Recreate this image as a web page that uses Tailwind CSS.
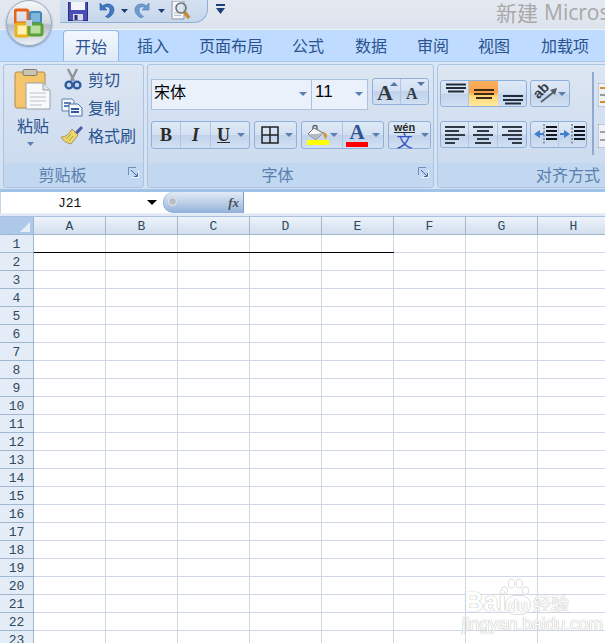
<!DOCTYPE html>
<html lang="zh">
<head>
<meta charset="utf-8">
<script src="https://cdn.jsdelivr.net/npm/@tailwindcss/browser@4"></script>
<title>Excel</title>
</head>
<body class="w-[605px] h-[643px] overflow-hidden relative bg-white font-['Noto_Sans_CJK_SC','Liberation_Sans',sans-serif]">

<!-- Office button -->
<div class="absolute left-[6px] top-0 w-[46px] h-[46px] rounded-full border border-[#9aa9bd] bg-[linear-gradient(#f7f8fa,#d3d9e2_50%,#b4bdc9_55%,#eef1f5)] shadow-[0_1px_2px_#7f93ad] flex items-center justify-center">
  <svg width="30" height="30" viewBox="0 0 30 30">
    <rect x="1" y="2" width="13" height="13" rx="2" fill="none" stroke="#e8641c" stroke-width="3"/>
    <rect x="16" y="4" width="11" height="11" rx="2" fill="#7fb6dc" stroke="#3f86bd" stroke-width="2"/>
    <rect x="2" y="16" width="12" height="12" rx="1" fill="#fff2b0" stroke="#e9b41c" stroke-width="3"/>
    <rect x="15" y="16" width="13" height="11" rx="2" fill="#b9dca0" stroke="#5da035" stroke-width="3"/>
    <rect x="12" y="12" width="6" height="6" fill="#c9d2db"/>
  </svg>
</div>

<!-- Title bar -->
<div class="h-[30px] flex items-start bg-[linear-gradient(#e4e9f1,#dde3ec)] border-b border-[#eef3fa]">
  <div class="ml-[60px] w-[148px] h-[23px] shrink-0 flex items-center rounded-br-[14px] border-r border-b border-[#8eaed8] bg-[linear-gradient(#d5e1f0,#c6d7ec)]">
    <!-- save -->
    <svg class="ml-[8px] shrink-0" width="20" height="19" viewBox="0 0 20 19">
      <rect x="0.5" y="-2" width="19" height="20.5" fill="#4b4eb4" stroke="#2b2e80"/>
      <rect x="3" y="-1" width="14" height="9" fill="#f2f4fa"/>
      <rect x="5" y="12" width="10" height="6.5" fill="#d7dbe8"/>
      <rect x="6.5" y="13" width="3" height="5" fill="#2b2e80"/>
    </svg>
    <!-- undo -->
    <svg class="ml-[9px] shrink-0" width="18" height="18" viewBox="0 0 18 18">
      <path d="M3 1 L3 8 L10 8 L7.4 5.6 C10 3.8 13 5 13 8 C13 11 11 13 8.5 14.5 L11 16 C15 14 17 11 17 7.5 C17 2.5 10.5 0 5.6 3.8 Z" fill="#3f78c0" stroke="#2a5b9e" stroke-width="0.6"/>
    </svg>
    <svg class="ml-[6px] shrink-0" width="7" height="4" viewBox="0 0 7 4"><path d="M0 0H7L3.5 4Z" fill="#1f3f78"/></svg>
    <!-- redo -->
    <svg class="ml-[6px] shrink-0" width="18" height="18" viewBox="0 0 18 18">
      <path d="M15 1 L15 8 L8 8 L10.6 5.6 C8 3.8 5 5 5 8 C5 11 7 13 9.5 14.5 L7 16 C3 14 1 11 1 7.5 C1 2.5 7.5 0 12.4 3.8 Z" fill="#6f9bd0" stroke="#4a78b0" stroke-width="0.6"/>
    </svg>
    <svg class="ml-[6px] shrink-0" width="7" height="4" viewBox="0 0 7 4"><path d="M0 0H7L3.5 4Z" fill="#1f3f78"/></svg>
    <!-- print preview -->
    <svg class="ml-[6px] shrink-0" width="21" height="20" viewBox="0 0 21 20">
      <path d="M1 0H13V18H1Z" fill="#f4f5f7" stroke="#8d96a3"/>
      <path d="M3 12H10M3 14.500H10" stroke="#b9bfc8"/>
      <circle cx="10" cy="7" r="5" fill="#cfe0ee" fill-opacity="0.7" stroke="#6d7076" stroke-width="1.6"/>
      <path d="M13.500 11L18 17" stroke="#c98a2a" stroke-width="3.400"/>
    </svg>
  </div>
  <svg class="ml-[8px] mt-[4px] shrink-0" width="9" height="11" viewBox="0 0 9 11"><rect x="0" y="0" width="9" height="2" fill="#1f3f78"/><path d="M0 4H9L4.5 10Z" fill="#1f3f78"/></svg>
  <div class="ml-[271px] shrink-0 flex gap-[6px] whitespace-nowrap text-[21px] leading-[24px] text-[#a8a8a8]"><span>新建</span><span class="font-['Open_Sans',sans-serif]">Micros</span></div>
</div>

<!-- Tabs -->
<div class="h-[31px] flex pl-[63px] bg-[#bfdbff] text-[16px] leading-[30px] text-[#2a5390] whitespace-nowrap">
  <div class="w-[56px] h-[31px] text-center rounded-t-[4px] border border-b-0 border-[#8fb6e4] bg-[linear-gradient(#f3f8fd,#dde9f7)] shrink-0">开始</div>
  <div class="w-[68px] text-center shrink-0">插入</div>
  <div class="w-[88px] text-center shrink-0">页面布局</div>
  <div class="w-[66px] text-center shrink-0">公式</div>
  <div class="w-[60px] text-center shrink-0">数据</div>
  <div class="w-[64px] text-center shrink-0">审阅</div>
  <div class="w-[58px] text-center shrink-0">视图</div>
  <div class="w-[84px] text-center shrink-0">加载项</div>
</div>

<!-- Ribbon -->
<div class="h-[131px] flex gap-[3px] pl-[3px] pt-[2px] bg-[linear-gradient(#dce7f5,#d3e1f2)] border-t border-[#a9c8ea] border-b-[3px] border-b-[#9fc4e8] overflow-hidden">

  <!-- Clipboard -->
  <div class="w-[141px] h-[124px] shrink-0 flex flex-col rounded-[3px] border border-[#aac5e4] bg-[linear-gradient(#dde6f2,#c9d9ee)]">
    <div class="h-[98px] flex text-[16px] text-[#2a5390] leading-[28px]">
      <div class="w-[60px] pl-[10px] flex flex-col items-start shrink-0">
        <svg class="mt-[4px]" width="38" height="42" viewBox="0 0 38 42">
          <rect x="1" y="3" width="30" height="36" rx="2" fill="#f5c56c" stroke="#b28a4e"/>
          <rect x="9" y="0.5" width="14" height="6" rx="1.5" fill="#c9c4b4" stroke="#857c68"/>
          <path d="M12 14H29L36 21V40H12Z" fill="#f8f9fb" stroke="#9aa3ad"/>
          <path d="M29 14V21H36" fill="#dfe4ea" stroke="#9aa3ad"/>
          <path d="M16 24H32M16 28H32M16 32H32M16 36H28" stroke="#bcc3cc"/>
        </svg>
        <div class="mt-[0px] ml-[3px]">粘贴</div>
        <svg class="ml-[13px] mt-[3px]" width="7" height="4" viewBox="0 0 7 4"><path d="M0 0H7L3.5 4Z" fill="#5b7fb0"/></svg>
      </div>
      <div class="flex flex-col -ml-[3px]">
        <div class="flex items-center h-[28px]">
          <svg class="w-[22px] ml-[1px]" width="20" height="22" viewBox="0 0 22 22">
            <path d="M6 1L12 13M15 1L9 13" stroke="#8f949b" stroke-width="2.4"/>
            <circle cx="7" cy="17" r="3.4" fill="#c8d6ea" stroke="#2f5aa0" stroke-width="2.4"/>
            <circle cx="15" cy="17" r="3.4" fill="#c8d6ea" stroke="#2f5aa0" stroke-width="2.4"/>
          </svg>
          <span class="ml-[4px]">剪切</span>
        </div>
        <div class="flex items-center h-[28px]">
          <svg class="w-[22px]" width="22" height="20" viewBox="0 0 22 20">
            <path d="M1 2H11L13 4V14H1Z" fill="#f4f7fb" stroke="#5f7fae"/>
            <path d="M3 6H10M3 9H10" stroke="#2f5aa0" stroke-width="1.400"/>
            <path d="M8 7H17L21 11V19H8Z" fill="#f4f7fb" stroke="#4f70a5"/>
            <path d="M10 12H18M10 15H18" stroke="#2f5aa0" stroke-width="1.800"/>
          </svg>
          <span class="ml-[5px]">复制</span>
        </div>
        <div class="flex items-center h-[28px]">
          <svg class="w-[22px]" width="22" height="20" viewBox="0 0 22 20">
            <path d="M13 8L20 1L22 3L15 11Z" fill="#4a5fa8"/>
            <path d="M11 4L17 10L10 19C6 18 2 16 0 12C5 12 8 9 11 4Z" fill="#ecd76e" stroke="#8e7a3a" stroke-width="0.7"/>
            <path d="M5 14L10 9M8 16L12 11" stroke="#a58d3f" stroke-width="0.8"/>
          </svg>
          <span class="ml-[5px]">格式刷</span>
        </div>
      </div>
    </div>
    <div class="flex-1 relative flex items-center justify-center pr-[22px] pb-[2px] bg-[#c1d8f0] text-[16px] text-[#5a7fae] rounded-b-[3px] leading-none">
      剪贴板
      <svg class="absolute right-[4px] top-[4px]" width="11" height="11" viewBox="0 0 11 11"><path d="M0.5 8V0.5H8" fill="none" stroke="#6f8fb8"/><path d="M3 3L9 9M6 9.5H9.5V6" fill="none" stroke="#3f6aa5"/><path d="M10.5 3V10.5H3" fill="none" stroke="#f3f7fc"/></svg>
    </div>
  </div>

  <!-- Font -->
  <div class="w-[287px] h-[124px] shrink-0 flex flex-col rounded-[3px] border border-[#aac5e4] bg-[linear-gradient(#dde6f2,#c9d9ee)]">
    <div class="h-[98px] pl-[3px] pt-[14px]">
      <div class="flex items-start">
        <div class="w-[161px] h-[31px] flex items-center justify-between pl-[2px] pr-[4px] border border-[#a9c2e0] bg-[#eaf1fb] text-[16px] text-black leading-none">
          <span class="mb-[8px]">宋体</span>
          <svg class="-mt-[2px]" width="8" height="4" viewBox="0 0 8 4"><path d="M0 0H8L4 4Z" fill="#5b7fb0"/></svg>
        </div>
        <div class="w-[57px] h-[31px] -ml-px flex items-center justify-between pl-[3px] pr-[4px] border border-[#a9c2e0] bg-[#eaf1fb] text-[17px] text-black leading-none font-['Liberation_Sans',sans-serif]">
          <span class="mb-[6px]">11</span>
          <svg class="-mt-[2px]" width="8" height="4" viewBox="0 0 8 4"><path d="M0 0H8L4 4Z" fill="#5b7fb0"/></svg>
        </div>
        <div class="ml-[4px] -mt-px w-[57px] h-[27px] flex rounded-[3px] border border-[#8fb0da] bg-[linear-gradient(#dfe9f6,#d3e0f1_50%,#c0d2ea_50%,#d2e0f2)] font-['Liberation_Serif',serif] font-bold text-[#333a44]">
          <div class="w-[28px] relative border-r border-[#aec6e4] text-[22px] leading-[27px] pl-[4px]">A<svg class="absolute right-[2px] top-[3px]" width="8" height="4" viewBox="0 0 8 4"><path d="M0 4H8L4 0Z" fill="#4f76ad"/></svg></div>
          <div class="flex-1 relative text-[16px] leading-[30px] pl-[5px]">A<svg class="absolute right-[3px] top-[3px]" width="8" height="4" viewBox="0 0 8 4"><path d="M0 0H8L4 4Z" fill="#4f76ad"/></svg></div>
        </div>
      </div>
      <div class="flex gap-[4px] mt-[11px] h-[28px]">
        <div class="w-[99px] flex rounded-[3px] border border-[#8fb0da] bg-[linear-gradient(#dfe9f6,#d3e0f1_50%,#c0d2ea_50%,#d2e0f2)] font-['Liberation_Serif',serif] font-bold text-[18px] leading-[26px] text-[#2a2a2a]">
          <div class="w-[29px] text-center border-r border-[#aec6e4]">B</div>
          <div class="w-[30px] text-center border-r border-[#aec6e4] italic">I</div>
          <div class="flex-1 flex items-center pl-[6px] gap-[7px]"><span class="underline">U</span><svg width="8" height="4" viewBox="0 0 8 4"><path d="M0 0H8L4 4Z" fill="#5b7fb0"/></svg></div>
        </div>
        <div class="w-[43px] flex items-center pl-[6px] gap-[6px] rounded-[3px] border border-[#8fb0da] bg-[linear-gradient(#dfe9f6,#d3e0f1_50%,#c0d2ea_50%,#d2e0f2)]">
          <svg width="18" height="18" viewBox="0 0 18 18"><path d="M1 1H17V17H1ZM9 1V17M1 9H17" fill="none" stroke="#222" stroke-width="1.5"/></svg>
          <svg width="8" height="4" viewBox="0 0 8 4"><path d="M0 0H8L4 4Z" fill="#5b7fb0"/></svg>
        </div>
        <div class="w-[83px] flex rounded-[3px] border border-[#8fb0da] bg-[linear-gradient(#dfe9f6,#d3e0f1_50%,#c0d2ea_50%,#d2e0f2)]">
          <div class="w-[41px] flex flex-col items-center relative border-r border-[#aec6e4] pr-[10px]">
            <svg class="mt-[2px]" width="22" height="17" viewBox="0 0 22 17">
              <path d="M7 6V3C7 1 11 1 11 3V6" fill="none" stroke="#5d6168" stroke-width="1.400"/>
              <path d="M8 4L17 9L10 16L2 10Z" fill="#f6f7f8" stroke="#6d7076"/>
              <path d="M2 10L10 16L17 9L10 10Z" fill="#b4bbc5"/>
              <path d="M17 8C21 9 22 12 20 15C18 13 17 11 17 8Z" fill="#d39a2a"/>
            </svg>
            <div class="w-[22px] h-[5px] bg-[#ffff00] -mt-[1px] ml-[1px]"></div>
            <svg class="absolute right-[4px] top-[11px]" width="8" height="4" viewBox="0 0 8 4"><path d="M0 0H8L4 4Z" fill="#5b7fb0"/></svg>
          </div>
          <div class="flex-1 flex flex-col items-center relative pr-[11px] ml-[-1px]">
            <span class="font-['Liberation_Serif',serif] font-bold text-[21px] leading-[20px] text-[#2f5293]">A</span>
            <div class="w-[22px] h-[5px] bg-[#ff0000]"></div>
            <svg class="absolute right-[3px] top-[11px]" width="8" height="4" viewBox="0 0 8 4"><path d="M0 0H8L4 4Z" fill="#5b7fb0"/></svg>
          </div>
        </div>
        <div class="w-[43px] flex items-center rounded-[3px] border border-[#8fb0da] bg-[linear-gradient(#dfe9f6,#d3e0f1_50%,#c0d2ea_50%,#d2e0f2)]">
          <div class="w-[27px] ml-[2px] flex flex-col items-center">
            <span class="font-['Liberation_Sans',sans-serif] font-bold text-[11px] leading-[10px] text-[#2a2a2a] border-b border-[#2a2a2a]">wén</span>
            <span class="text-[16px] leading-[15px] text-[#3350c0]">文</span>
          </div>
          <svg class="ml-[3px]" width="8" height="4" viewBox="0 0 8 4"><path d="M0 0H8L4 4Z" fill="#5b7fb0"/></svg>
        </div>
      </div>
    </div>
    <div class="flex-1 relative flex items-center justify-center pr-[26px] pb-[2px] bg-[#c1d8f0] text-[16px] text-[#5a7fae] rounded-b-[3px] leading-none">
      字体
      <svg class="absolute right-[4px] top-[4px]" width="11" height="11" viewBox="0 0 11 11"><path d="M0.5 8V0.5H8" fill="none" stroke="#6f8fb8"/><path d="M3 3L9 9M6 9.5H9.5V6" fill="none" stroke="#3f6aa5"/><path d="M10.5 3V10.5H3" fill="none" stroke="#f3f7fc"/></svg>
    </div>
  </div>

  <!-- Alignment -->
  <div class="w-[190px] h-[124px] shrink-0 flex flex-col rounded-l-[3px] border border-[#aac5e4] bg-[linear-gradient(#dde6f2,#c9d9ee)]">
    <div class="h-[98px] flex">
      <div class="w-[150px] pl-[2px] pt-[15px] shrink-0">
        <div class="flex gap-[3px]">
          <div class="w-[87px] h-[27px] flex rounded-[3px] border border-[#8fb0da] overflow-hidden bg-[linear-gradient(#dfe9f6,#d3e0f1_50%,#c0d2ea_50%,#d2e0f2)]">
            <div class="w-[28px] border-r border-[#aec6e4]">
              <svg width="28" height="25" viewBox="0 0 28 25"><path d="M5 3.5H25M5 7H25M7 10.5H23" stroke="#222c3a" stroke-width="1.800"/></svg>
            </div>
            <div class="w-[29px] bg-[linear-gradient(#fbb05f,#f9a046_45%,#ffd877_60%,#ffe99c)]">
              <svg width="29" height="25" viewBox="0 0 29 25"><path d="M5 9H25M5 13H25M7 17H23" stroke="#3a2c18" stroke-width="1.800"/></svg>
            </div>
            <div class="flex-1">
              <svg width="28" height="25" viewBox="0 0 28 25"><path d="M5 15H25M5 19H25M7 22.5H23" stroke="#222c3a" stroke-width="1.800"/></svg>
            </div>
          </div>
          <div class="w-[40px] h-[27px] flex items-center relative rounded-[3px] border border-[#8fb0da] bg-[linear-gradient(#dfe9f6,#d3e0f1_50%,#c0d2ea_50%,#d2e0f2)]">
            <svg class="absolute left-[4px] top-[3px]" width="24" height="20" viewBox="0 0 24 20"><path d="M6 18L20 7" stroke="#555c66" stroke-width="1.600"/><path d="M22 4L20 11L15 6Z" fill="#555c66"/></svg>
            <span class="absolute left-[2px] top-[2px] text-[14px] leading-[15px] font-bold text-[#333a44] rotate-[-45deg] font-['Liberation_Sans',sans-serif]">ab</span>
            <svg class="ml-[27px]" width="8" height="4" viewBox="0 0 8 4"><path d="M0 0H8L4 4Z" fill="#5b7fb0"/></svg>
          </div>
        </div>
        <div class="flex gap-[3px] mt-[14px]">
          <div class="w-[87px] h-[27px] flex rounded-[3px] border border-[#8fb0da] bg-[linear-gradient(#dfe9f6,#d3e0f1_50%,#c0d2ea_50%,#d2e0f2)]">
            <div class="w-[28px] border-r border-[#aec6e4]"><svg width="28" height="25" viewBox="0 0 28 25"><path d="M4 5H24M4 9H18M4 13H24M4 17H18M4 21H14" stroke="#2f3947" stroke-width="1.800"/></svg></div>
            <div class="w-[29px] border-r border-[#aec6e4]"><svg width="28" height="25" viewBox="0 0 28 25"><path d="M4 5H24M8 9H20M4 13H24M8 17H20M6 21H22" stroke="#2f3947" stroke-width="1.800"/></svg></div>
            <div class="flex-1"><svg width="28" height="25" viewBox="0 0 28 25"><path d="M4 5H24M10 9H24M4 13H24M10 17H24M14 21H24" stroke="#2f3947" stroke-width="1.800"/></svg></div>
          </div>
          <div class="w-[57px] h-[27px] flex rounded-[3px] border border-[#8fb0da] bg-[linear-gradient(#dfe9f6,#d3e0f1_50%,#c0d2ea_50%,#d2e0f2)]">
            <div class="w-[28px] border-r border-[#aec6e4]"><svg width="27" height="25" viewBox="0 0 27 25"><path d="M13 2V23" stroke="#4a5563" stroke-dasharray="2 1.5"/><path d="M15 5H26M15 9H26M15 13H26M15 17H26" stroke="#111820" stroke-width="2"/><path d="M3 12L9 8V16Z" fill="#3f7fd0"/><path d="M8 12H13" stroke="#3f7fd0" stroke-width="2"/></svg></div>
            <div class="flex-1"><svg width="27" height="25" viewBox="0 0 27 25"><path d="M13 2V23" stroke="#4a5563" stroke-dasharray="2 1.5"/><path d="M15 5H26M15 9H26M15 13H26M15 17H26" stroke="#111820" stroke-width="2"/><path d="M11 12L5 8V16Z" fill="#3f7fd0"/><path d="M1 12H6" stroke="#3f7fd0" stroke-width="2"/></svg></div>
          </div>
        </div>
      </div>
      <div class="w-[2px] h-[83px] mt-[7px] ml-[4px] bg-[#8fabd0] shrink-0"></div>
      <div class="ml-[4px] pt-[18px] flex flex-col gap-[17px]">
        <svg width="20" height="24" viewBox="0 0 20 24"><rect x="0" y="0" width="20" height="24" fill="#eef1f5" stroke="#8f9fb2"/><path d="M2 5H18" stroke="#d98a2a" stroke-width="2"/><path d="M2 12H18" stroke="#444"/><path d="M2 19H18" stroke="#d98a2a" stroke-width="2"/></svg>
        <svg width="20" height="24" viewBox="0 0 20 24"><rect x="0" y="0" width="20" height="24" fill="#eef1f5" stroke="#8f9fb2"/><path d="M2 8H18M2 16H18" stroke="#555"/></svg>
      </div>
    </div>
    <div class="flex-1 flex items-center pl-[98px] pb-[2px] bg-[#c1d8f0] text-[16px] text-[#5a7fae] leading-none whitespace-nowrap">对齐方式</div>
  </div>
</div>

<!-- Formula bar -->
<div class="h-[21px] flex bg-white">
  <div class="w-[163px] flex items-center relative pl-[57px] pt-[3px] font-['Liberation_Mono',monospace] text-[13px] text-[#111] shrink-0 border-l border-[#c6d6ea]">
    J21
    <svg class="absolute left-[146px] top-[8px]" width="10" height="5" viewBox="0 0 10 5"><path d="M0 0H10L5 5Z" fill="#000"/></svg>
  </div>
  <div class="w-[81px] relative shrink-0 rounded-l-[10px] border-l border-[#8fb0da] border-r border-r-[#7f9dc4] bg-[linear-gradient(#e2eaf5,#b9cde6_55%,#8fb0da)]">
    <div class="absolute left-[4px] top-[5px] w-[9px] h-[9px] rounded-full bg-[#b9bec6] border border-[#e8ebef]"></div>
    <span class="absolute right-[4px] top-[1px] font-['Liberation_Serif',serif] italic font-bold text-[13px] leading-[19px] text-[#4a4f58]">fx</span>
  </div>
  <div class="flex-1"></div>
</div>
<div class="h-[4px] bg-[#e0e9f5] border-t border-[#e8eef7] border-b border-b-[#a9c0de]"></div>

<!-- Sheet -->
<div class="flex font-['Liberation_Mono',monospace] text-[13px] text-[#2c4a5e]">
  <div class="w-[34px] shrink-0">
    <div class="h-[18px] bg-[#aec8ea] border-r border-b border-[#9eb6ce] relative">
      <svg class="absolute right-[3px] bottom-[2px]" width="10" height="10" viewBox="0 0 10 10"><path d="M0 10L10 0V10Z" fill="#e6eef8"/></svg>
    </div>
    <div class="h-[18px] leading-[20px] text-center bg-[#e4ecf7] border-r border-b border-[#9eb6ce]">1</div>
    <div class="h-[18px] leading-[20px] text-center bg-[#e4ecf7] border-r border-b border-[#9eb6ce]">2</div>
    <div class="h-[18px] leading-[20px] text-center bg-[#e4ecf7] border-r border-b border-[#9eb6ce]">3</div>
    <div class="h-[18px] leading-[20px] text-center bg-[#e4ecf7] border-r border-b border-[#9eb6ce]">4</div>
    <div class="h-[18px] leading-[20px] text-center bg-[#e4ecf7] border-r border-b border-[#9eb6ce]">5</div>
    <div class="h-[18px] leading-[20px] text-center bg-[#e4ecf7] border-r border-b border-[#9eb6ce]">6</div>
    <div class="h-[18px] leading-[20px] text-center bg-[#e4ecf7] border-r border-b border-[#9eb6ce]">7</div>
    <div class="h-[18px] leading-[20px] text-center bg-[#e4ecf7] border-r border-b border-[#9eb6ce]">8</div>
    <div class="h-[18px] leading-[20px] text-center bg-[#e4ecf7] border-r border-b border-[#9eb6ce]">9</div>
    <div class="h-[18px] leading-[20px] text-center bg-[#e4ecf7] border-r border-b border-[#9eb6ce]">10</div>
    <div class="h-[18px] leading-[20px] text-center bg-[#e4ecf7] border-r border-b border-[#9eb6ce]">11</div>
    <div class="h-[18px] leading-[20px] text-center bg-[#e4ecf7] border-r border-b border-[#9eb6ce]">12</div>
    <div class="h-[18px] leading-[20px] text-center bg-[#e4ecf7] border-r border-b border-[#9eb6ce]">13</div>
    <div class="h-[18px] leading-[20px] text-center bg-[#e4ecf7] border-r border-b border-[#9eb6ce]">14</div>
    <div class="h-[18px] leading-[20px] text-center bg-[#e4ecf7] border-r border-b border-[#9eb6ce]">15</div>
    <div class="h-[18px] leading-[20px] text-center bg-[#e4ecf7] border-r border-b border-[#9eb6ce]">16</div>
    <div class="h-[18px] leading-[20px] text-center bg-[#e4ecf7] border-r border-b border-[#9eb6ce]">17</div>
    <div class="h-[18px] leading-[20px] text-center bg-[#e4ecf7] border-r border-b border-[#9eb6ce]">18</div>
    <div class="h-[18px] leading-[20px] text-center bg-[#e4ecf7] border-r border-b border-[#9eb6ce]">19</div>
    <div class="h-[18px] leading-[20px] text-center bg-[#e4ecf7] border-r border-b border-[#9eb6ce]">20</div>
    <div class="h-[18px] leading-[20px] text-center bg-[#e4ecf7] border-r border-b border-[#9eb6ce]">21</div>
    <div class="h-[18px] leading-[20px] text-center bg-[#e4ecf7] border-r border-b border-[#9eb6ce]">22</div>
    <div class="h-[18px] leading-[20px] text-center bg-[#e4ecf7] border-r border-b border-[#9eb6ce]">23</div>
  </div>
  <div class="flex-1 min-w-0 overflow-hidden">
    <div class="flex h-[18px] leading-[19px] text-center">
      <div class="w-[72px] shrink-0 border-r border-b border-[#9eb6ce] bg-[linear-gradient(#eef3fa,#d2deee)]">A</div>
      <div class="w-[72px] shrink-0 border-r border-b border-[#9eb6ce] bg-[linear-gradient(#eef3fa,#d2deee)]">B</div>
      <div class="w-[72px] shrink-0 border-r border-b border-[#9eb6ce] bg-[linear-gradient(#eef3fa,#d2deee)]">C</div>
      <div class="w-[72px] shrink-0 border-r border-b border-[#9eb6ce] bg-[linear-gradient(#eef3fa,#d2deee)]">D</div>
      <div class="w-[72px] shrink-0 border-r border-b border-[#9eb6ce] bg-[linear-gradient(#eef3fa,#d2deee)]">E</div>
      <div class="w-[72px] shrink-0 border-r border-b border-[#9eb6ce] bg-[linear-gradient(#eef3fa,#d2deee)]">F</div>
      <div class="w-[72px] shrink-0 border-r border-b border-[#9eb6ce] bg-[linear-gradient(#eef3fa,#d2deee)]">G</div>
      <div class="w-[72px] shrink-0 border-r border-b border-[#9eb6ce] bg-[linear-gradient(#eef3fa,#d2deee)]">H</div>
    </div>
    <div class="h-[414px] bg-[linear-gradient(to_right,transparent_71px,#d0d7e5_71px),linear-gradient(to_bottom,transparent_17px,#d0d7e5_17px)] bg-[size:72px_18px] pt-[17px]">
      <div class="w-[360px] h-px bg-black"></div>
    </div>
  </div>
</div>

<!-- Watermark -->
<div class="absolute left-[462px] top-[576px] w-[112px] h-[56px] font-['Liberation_Sans',sans-serif] text-white [text-shadow:0_0_1px_#b5b5b5,0_0_1px_#b5b5b5]">
  <svg class="absolute left-[38px] top-[2px]" width="30" height="20" viewBox="0 0 34 22">
    <ellipse cx="5" cy="14" rx="3.5" ry="4.5" fill="#fff" stroke="#d8d8d8"/>
    <ellipse cx="13" cy="6" rx="3.5" ry="5" fill="#fff" stroke="#d8d8d8"/>
    <ellipse cx="22" cy="6" rx="3.5" ry="5" fill="#fff" stroke="#d8d8d8"/>
    <ellipse cx="29" cy="14" rx="3.5" ry="4.5" fill="#fff" stroke="#d8d8d8"/>
  </svg>
  <span class="absolute left-[2px] top-[15px] text-[27px] leading-[22px] font-bold">Bai</span>
  <span class="absolute left-[43px] top-[19px] w-[26px] h-[20px] rounded-full text-center text-[16px] leading-[19px] font-bold bg-white/70 border border-[#ddd]">du</span>
  <span class="absolute left-[71px] top-[16px] text-[18px] leading-[22px] font-['Noto_Sans_CJK_SC',sans-serif]">经验</span>
  <span class="absolute left-0 top-[41px] text-[17.500px] leading-[15px] whitespace-nowrap">jingyan.baidu.com</span>
</div>
</body>
</html>
